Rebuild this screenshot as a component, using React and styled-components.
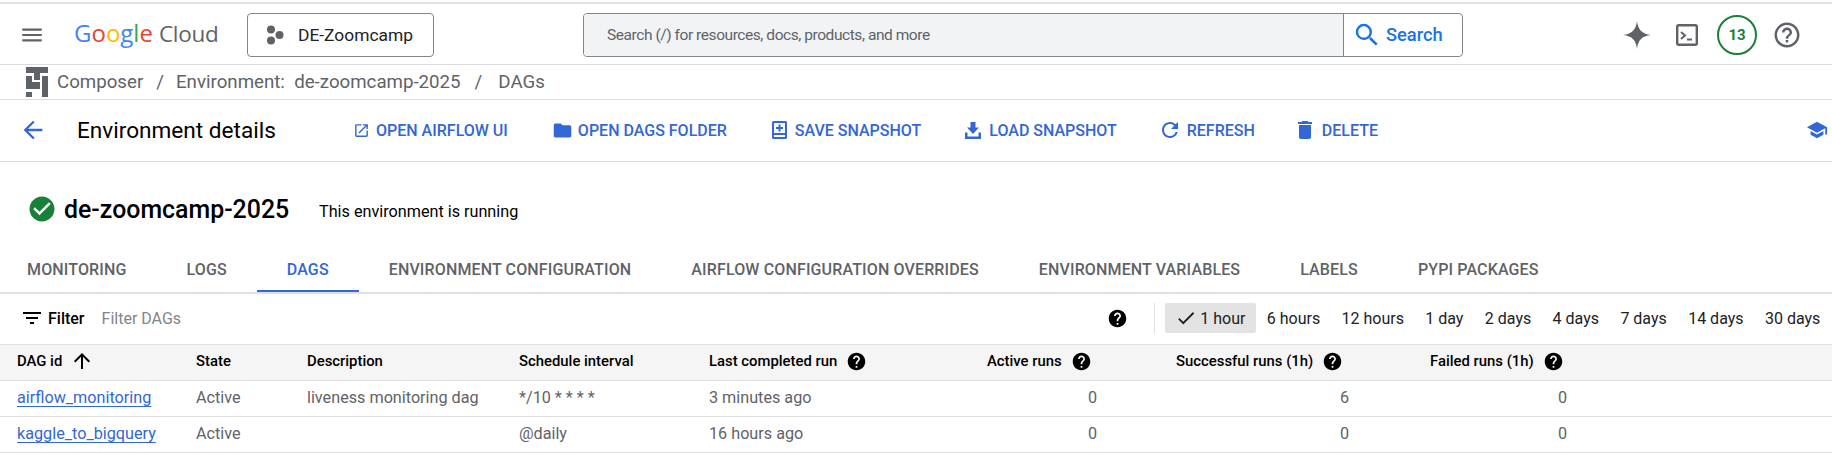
import React from "react";
import styled, { createGlobalStyle } from "styled-components";
import {
  MdMenu,
  MdArrowBack,
  MdOpenInNew,
  MdFolder,
  MdRefresh,
  MdDelete,
  MdSchool,
  MdSearch,
  MdFilterList,
  MdHelp,
  MdHelpOutline,
  MdArrowUpward,
  MdCheck,
  MdCheckCircle,
} from "react-icons/md";

const BLUE = "#3367d6";

const GlobalStyle = createGlobalStyle`
  html, body { margin: 0; padding: 0; background: #fff; }
  body { font-family: Roboto, "Liberation Sans", sans-serif; font-size: 16px; color: #202124; overflow: hidden; }
`;

const Page = styled.div`
  width: 1832px;
  height: 469px;
  overflow: hidden;
  padding-top: 2px;
  box-sizing: border-box;
`;

const TopLine = styled.div`
  height: 2px;
  background: #e0e0e0;
`;

const Header = styled.header`
  height: 60px;
  box-sizing: border-box;
  border-bottom: 1px solid #dadce0;
  display: flex;
  align-items: center;
  padding: 0 30px 0 19px;
  margin-top: 1px;
`;

const MenuBtn = styled.div`
  display: flex;
  color: #5f6368;
  font-size: 26px;
  margin-right: 29px;
`;

const Logo = styled.div`
  width: 173px;
  display: flex;
  align-items: baseline;
  font-family: "Open Sans", sans-serif;
  font-size: 24px;
  margin-bottom: 4px;
`;

const LogoLetter = styled.span`
  color: ${(p) => p.$c};
`;

const CloudWord = styled.span`
  color: #5f6368;
  font-size: 22.5px;
  margin-left: 6px;
  letter-spacing: -0.3px;
`;

const ProjectBtn = styled.div`
  width: 187px;
  height: 44px;
  box-sizing: border-box;
  border: 1px solid #80868b;
  border-radius: 4px;
  display: flex;
  align-items: center;
  gap: 14px;
  padding-left: 18px;
  font-size: 17.4px;
  color: #202124;
`;

const SearchBox = styled.div`
  margin-left: 149px;
  width: 880px;
  height: 44px;
  box-sizing: border-box;
  border: 1px solid #80868b;
  border-radius: 4px;
  display: flex;
  overflow: hidden;
`;

const SearchInput = styled.div`
  flex: 1;
  background: #f1f3f4;
  border-right: 1px solid #80868b;
  display: flex;
  align-items: center;
  padding-left: 23px;
  font-size: 15.5px;
  letter-spacing: -0.44px;
  color: #5f6368;
`;

const SearchBtn = styled.div`
  width: 118px;
  display: flex;
  align-items: center;
  gap: 4px;
  padding-left: 8px;
  box-sizing: border-box;
  color: #1a73e8;
  font-size: 18.3px;
  font-weight: 500;
  svg { font-size: 30px; }
`;

const HeaderIcons = styled.div`
  margin-left: auto;
  display: flex;
  align-items: center;
  color: #5f6368;
  gap: 19px;
  margin-top: 1px;
`;

const SparkSlot = styled.div`
  display: flex;
  margin-right: 6px;
`;

const HelpSlot = styled.div`
  display: flex;
  margin-left: -4px;
`;

const TrialBadge = styled.div`
  width: 40px;
  height: 40px;
  box-sizing: border-box;
  border: 2.5px solid #188038;
  border-radius: 50%;
  display: flex;
  align-items: center;
  justify-content: center;
  font-size: 15px;
  font-weight: 700;
  color: #188038;
`;

const Breadcrumb = styled.nav`
  height: 35px;
  box-sizing: border-box;
  border-bottom: 1px solid #dadce0;
  display: flex;
  align-items: center;
  padding: 0 0 1px 26px;
  font-size: 18.7px;
  color: #5f6368;
`;

const Crumb = styled.span`
  white-space: pre;
`;

const Sep = styled.span`
  margin: 0 ${(p) => p.$right}px 0 ${(p) => p.$left}px;
`;

const ActionBar = styled.div`
  height: 62px;
  box-sizing: border-box;
  border-bottom: 1px solid #dadce0;
  display: flex;
  align-items: center;
  padding: 0 4px 1px 19px;
`;

const BackBtn = styled.div`
  display: flex;
  color: ${BLUE};
  font-size: 28px;
  width: 58px;
`;

const PageTitle = styled.h1`
  margin: 0;
  width: 276px;
  font-size: 22.6px;
  font-weight: 400;
  color: #000;
`;

const ActionBtn = styled.div`
  display: flex;
  align-items: center;
  color: ${BLUE};
  font-size: 16px;
  font-weight: 500;
  margin-right: ${(p) => p.$gap}px;
  white-space: nowrap;
`;

const ActionIcon = styled.span`
  display: flex;
  align-items: center;
  width: ${(p) => p.$w || 24}px;
`;

const LearnBtn = styled.div`
  margin-left: auto;
  display: flex;
  color: ${BLUE};
  font-size: 22px;
`;

const EnvRow = styled.div`
  height: 98px;
  display: flex;
  align-items: center;
  padding: 0 0 4px 27px;
  box-sizing: border-box;
`;

const StatusIcon = styled.div`
  display: flex;
  color: #188038;
  font-size: 30px;
  margin-right: 7px;
`;

const EnvName = styled.h2`
  margin: 0;
  font-size: 24.9px;
  font-weight: 500;
  color: #000;
  width: 255px;
`;

const EnvStatus = styled.span`
  font-size: 16.2px;
  color: #000;
  margin-top: 4px;
`;

const Tabs = styled.div`
  height: 32px;
  display: flex;
  border-bottom: 2px solid #e0e0e0;
  margin-left: -3px;
`;

const Tab = styled.div`
  height: 32px;
  box-sizing: border-box;
  padding: 0 30px;
  font-size: 16px;
  font-weight: 500;
  letter-spacing: 0.14px;
  white-space: nowrap;
  color: ${(p) => (p.$active ? BLUE : "#5f6368")};
  border-bottom: 2px solid ${(p) => (p.$active ? BLUE : "transparent")};
`;

const FilterRow = styled.div`
  height: 50px;
  display: flex;
  align-items: center;
  padding: 0 1px 2px 20px;
  box-sizing: border-box;
`;

const FilterLabel = styled.div`
  display: flex;
  align-items: center;
  gap: 4px;
  font-size: 16px;
  font-weight: 500;
  color: #000;
  margin-right: 17px;
  svg { font-size: 24px; }
`;

const FilterHint = styled.span`
  color: #80868b;
  font-size: 16px;
`;

const HelpIcon = styled(MdHelp)`
  color: #000;
  font-size: 21px;
  flex: none;
`;

const RangeGroup = styled.div`
  margin-left: auto;
  display: flex;
  align-items: center;
`;

const RangeDivider = styled.div`
  width: 1px;
  height: 30px;
  background: #e0e0e0;
  margin: 0 10px 0 26px;
`;

const RangeBtn = styled.div`
  height: 30px;
  padding: 0 10.7px;
  display: flex;
  align-items: center;
  gap: 3px;
  white-space: nowrap;
  font-size: 16px;
  color: #202124;
  background: ${(p) => (p.$active ? "#e3e3e3" : "transparent")};
  border-radius: 2px;
  svg { font-size: 22px; }
`;

const GRID = "179px 111px 212px 190px 278px 189px 254px 218px 1fr";

const Row = styled.div`
  display: grid;
  grid-template-columns: ${GRID};
  height: ${(p) => (p.$head ? 37 : 36)}px;
  box-sizing: border-box;
  padding-bottom: ${(p) => (p.$head ? 3 : 2)}px;
  align-items: center;
  border-bottom: 1px solid #e0e0e0;
  background: ${(p) => (p.$head ? "#f5f5f5" : "#fff")};
  border-top: ${(p) => (p.$head ? "1px solid #e0e0e0" : "0")};
  font-weight: ${(p) => (p.$head ? 500 : 400)};
  color: ${(p) => (p.$head ? "#000" : "#5f6368")};
  font-size: ${(p) => (p.$head ? "14.86px" : "16.2px")};
`;

const Cell = styled.div`
  display: flex;
  align-items: center;
  gap: ${(p) => p.$gap || 9}px;
  padding-left: 17px;
  white-space: nowrap;
`;

const NumCell = styled.div`
  text-align: right;
  padding-right: ${(p) => p.$pr}px;
`;

const DagLink = styled.a`
  color: ${BLUE};
  text-decoration: underline;
  text-underline-offset: 3px;
`;

const Composer = styled.svg`
  width: 22px;
  height: 30px;
  margin-right: 9px;
  flex: none;
`;

const googleLetters = [
  ["G", "#4285f4"],
  ["o", "#ea4335"],
  ["o", "#fbbc05"],
  ["g", "#4285f4"],
  ["l", "#34a853"],
  ["e", "#ea4335"],
];

const ranges = ["6 hours", "12 hours", "1 day", "2 days", "4 days", "7 days", "14 days", "30 days"];
const tabs = ["MONITORING", "LOGS", "DAGS", "ENVIRONMENT CONFIGURATION", "AIRFLOW CONFIGURATION OVERRIDES", "ENVIRONMENT VARIABLES", "LABELS", "PYPI PACKAGES"];

const dags = [
  { id: "airflow_monitoring", desc: "liveness monitoring dag", sched: "*/10 * * * *", last: "3 minutes ago", ok: 6 },
  { id: "kaggle_to_bigquery", desc: "", sched: "@daily", last: "16 hours ago", ok: 0 },
];

export default function App() {
  return (
    <Page>
      <GlobalStyle />
      <TopLine />
      <Header>
        <MenuBtn><MdMenu /></MenuBtn>
        <Logo>
          {googleLetters.map(([l, c], i) => (
            <LogoLetter key={i} $c={c}>{l}</LogoLetter>
          ))}
          <CloudWord>Cloud</CloudWord>
        </Logo>
        <ProjectBtn>
          <svg width="18" height="20" viewBox="0 0 18 20">
            <circle cx="5" cy="4.5" r="4" fill="#5f6368" />
            <circle cx="13.5" cy="10" r="4" fill="#5f6368" />
            <circle cx="5" cy="15.5" r="4" fill="#5f6368" />
          </svg>
          DE-Zoomcamp
        </ProjectBtn>
        <SearchBox>
          <SearchInput>Search (/) for resources, docs, products, and more</SearchInput>
          <SearchBtn><MdSearch />Search</SearchBtn>
        </SearchBox>
        <HeaderIcons>
          <SparkSlot>
            <svg width="28" height="28" viewBox="0 0 30 30">
              <path fill="#5f6368" d="M15 0c1 9 5 14 15 15-10 1-14 6-15 15-1-9-5-14-15-15 10-1 14-6 15-15z" />
            </svg>
          </SparkSlot>
          <svg width="22" height="22" viewBox="0 0 22 22">
            <rect x="1.200" y="1.200" width="19.600" height="19.600" rx="1.500" fill="none" stroke="#5f6368" strokeWidth="2.400" />
            <path fill="none" stroke="#5f6368" strokeWidth="2" d="M5 8l4 3.500L5 15M11 15.500h5" />
          </svg>
          <TrialBadge>13</TrialBadge>
          <HelpSlot><MdHelpOutline size={30} /></HelpSlot>
        </HeaderIcons>
      </Header>
      <Breadcrumb>
        <Composer viewBox="0 0 22 30">
          <path fill="#5f6368" d="M0 0h22v6H0zM8 6h6v7H8zM0 9h6v13H0zM6 15h8v7H6zM16 9h6v21h-6zM0 25h6v5H0z" />
        </Composer>
        <Crumb>Composer</Crumb><Sep $left={13} $right={12}>/</Sep>
        <Crumb>Environment:  de-zoomcamp-2025</Crumb><Sep $left={14} $right={16}>/</Sep>
        <Crumb>DAGs</Crumb>
      </Breadcrumb>
      <ActionBar>
        <BackBtn><MdArrowBack /></BackBtn>
        <PageTitle>Environment details</PageTitle>
        <ActionBtn $gap={44}><ActionIcon $w={23}><MdOpenInNew size={17} /></ActionIcon>OPEN AIRFLOW UI</ActionBtn>
        <ActionBtn $gap={45}><ActionIcon $w={26}><MdFolder size={21} /></ActionIcon>OPEN DAGS FOLDER</ActionBtn>
        <ActionBtn $gap={44}>
          <ActionIcon $w={23}>
            <svg width="15" height="18" viewBox="0 0 15 18">
              <path fill={BLUE} fillRule="evenodd" d="M1.500 0h12A1.500 1.500 0 0 1 15 1.500v15a1.500 1.500 0 0 1-1.500 1.500h-12A1.500 1.500 0 0 1 0 16.500v-15A1.500 1.500 0 0 1 1.500 0zM2 2v10h11V2zm0 12v2h11v-2zM6.500 3.500h2v2.500H11v2H8.500v2.500h-2V8H4V6h2.500z" />
            </svg>
          </ActionIcon>
          SAVE SNAPSHOT
        </ActionBtn>
        <ActionBtn $gap={41}>
          <ActionIcon>
            <svg width="16" height="17" viewBox="0 0 16 17">
              <path fill={BLUE} d="M5.500 0h5v5.500h3.500L8 12 2 5.500h3.500zM0 10.500h2.500v4h11v-4H16V17H0z" />
            </svg>
          </ActionIcon>
          LOAD SNAPSHOT
        </ActionBtn>
        <ActionBtn $gap={38}><ActionIcon $w={29}><MdRefresh size={24} /></ActionIcon>REFRESH</ActionBtn>
        <ActionBtn $gap={0}><ActionIcon $w={29}><MdDelete size={24} /></ActionIcon>DELETE</ActionBtn>
        <LearnBtn><MdSchool /></LearnBtn>
      </ActionBar>
      <EnvRow>
        <StatusIcon><MdCheckCircle /></StatusIcon>
        <EnvName>de-zoomcamp-2025</EnvName>
        <EnvStatus>This environment is running</EnvStatus>
      </EnvRow>
      <Tabs>
        {tabs.map((t) => (
          <Tab key={t} $active={t === "DAGS"}>{t}</Tab>
        ))}
      </Tabs>
      <FilterRow>
        <FilterLabel><MdFilterList />Filter</FilterLabel>
        <FilterHint>Filter DAGs</FilterHint>
        <RangeGroup>
          <HelpIcon />
          <RangeDivider />
          <RangeBtn $active><MdCheck />1 hour</RangeBtn>
          {ranges.map((r) => (
            <RangeBtn key={r}>{r}</RangeBtn>
          ))}
        </RangeGroup>
      </FilterRow>
      <Row $head>
        <Cell $gap={8}>DAG id <MdArrowUpward size={24} /></Cell>
        <Cell>State</Cell>
        <Cell>Description</Cell>
        <Cell>Schedule interval</Cell>
        <Cell>Last completed run <HelpIcon /></Cell>
        <Cell>Active runs <HelpIcon /></Cell>
        <Cell>Successful runs (1h) <HelpIcon /></Cell>
        <Cell>Failed runs (1h) <HelpIcon /></Cell>
      </Row>
      {dags.map((d) => (
        <Row key={d.id}>
          <Cell><DagLink>{d.id}</DagLink></Cell>
          <Cell>Active</Cell>
          <Cell>{d.desc}</Cell>
          <Cell>{d.sched}</Cell>
          <Cell>{d.last}</Cell>
          <NumCell $pr={62}>0</NumCell>
          <NumCell $pr={64}>{d.ok}</NumCell>
          <NumCell $pr={64}>0</NumCell>
        </Row>
      ))}
    </Page>
  );
}
